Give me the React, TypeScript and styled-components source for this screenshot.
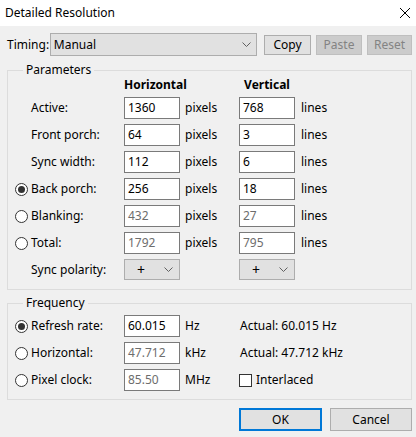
import React from 'react';
import styled, {createGlobalStyle} from 'styled-components';

const GlobalStyle = createGlobalStyle`
  html, body {
    margin: 0;
    padding: 0;
    background: #f0f0f0;
  }
  body {
    font-family: "Noto Sans", "Open Sans", sans-serif;
    font-size: 12px;
    color: #000;
  }
`

const Window = styled.div`
  width: 416px;
  height: 437px;
  background: #f0f0f0;
  overflow: hidden;
  display: flex;
  flex-direction: column;
`

const TitleBar = styled.div`
  height: 26px;
  background: #fff;
  display: flex;
  align-items: center;
  justify-content: space-between;
  padding: 0 6px 0 5px;
  flex-shrink: 0;
`

const Title = styled.span`
  font-size: 12px;
  line-height: 16px;
`

const Body = styled.div`
  padding: 7px 4px 0 7px;
  display: flex;
  flex-direction: column;
`

const TimingRow = styled.div`
  display: flex;
  align-items: center;
  height: 23px;
`

const TimingLabel = styled.span`
  width: 43px;
  line-height: 16px;
`

const Combo = styled.div`
  box-sizing: border-box;
  width: 208px;
  height: 23px;
  background: #e1e1e1;
  border: 1px solid #adadad;
  display: flex;
  align-items: center;
  justify-content: space-between;
  padding: 0 5px 0 3px;
`

const Buttons = styled.div`
  display: flex;
  gap: 5px;
  margin-left: 7px;
`

const Button = styled.button<{$disabled?: boolean; $w?: number; $h?: number; $default?: boolean}>`
  box-sizing: border-box;
  width: ${({$w}) => $w ?? 47}px;
  height: ${({$h}) => $h ?? 20}px;
  padding: 0;
  font-family: inherit;
  font-size: 12px;
  line-height: 16px;
  background: ${({$disabled}) => ($disabled ? '#cccccc' : '#e1e1e1')};
  color: ${({$disabled}) => ($disabled ? '#838383' : '#000')};
  border: ${({$default, $disabled}) =>
    $default ? '2px solid #0078d7' : `1px solid ${$disabled ? '#bfbfbf' : '#adadad'}`};
`

const Group = styled.fieldset<{$top: number}>`
  margin: ${({$top}) => $top}px 0 0 0;
  padding: 0 0 8px 7px;
  border: 1px solid #dcdcdc;
  min-width: 0;
`

const Legend = styled.legend`
  margin-left: 8px;
  padding: 0 3px;
  line-height: 16px;
  font-size: 12px;
`

const Grid = styled.div<{$pt: number; $header?: boolean}>`
  display: grid;
  grid-template-columns: 109px 56px 59px 56px 1fr;
  grid-template-rows: ${({$header}) => ($header ? '14px' : 'none')};
  grid-auto-rows: 22px;
  row-gap: 5px;
  padding-top: ${({$pt}) => $pt}px;
  align-items: center;
`

const Header = styled.div`
  font-weight: bold;
  text-align: center;
  white-space: nowrap;
  line-height: 14px;
  align-self: end;
`

const LabelCell = styled.label`
  display: flex;
  align-items: center;
  line-height: 16px;
  white-space: nowrap;
`

const RadioSlot = styled.span`
  width: 16px;
  flex-shrink: 0;
  display: flex;
  align-items: center;
`

const Radio = styled.span<{$checked?: boolean}>`
  box-sizing: border-box;
  width: 13px;
  height: 13px;
  border-radius: 50%;
  border: 1px solid #333;
  background: #fff;
  display: flex;
  align-items: center;
  justify-content: center;

  &::after {
    content: '';
    width: 7px;
    height: 7px;
    border-radius: 50%;
    background: ${({$checked}) => ($checked ? '#333' : 'transparent')};
  }
`

const Field = styled.div<{$disabled?: boolean}>`
  box-sizing: border-box;
  height: 22px;
  border: 1px solid #7a7a7a;
  background: #fff;
  color: ${({$disabled}) => ($disabled ? '#6d6d6d' : '#000')};
  padding-left: 3px;
  line-height: 20px;
`

const Unit = styled.span<{$pl: number}>`
  padding-left: ${({$pl}) => $pl}px;
  line-height: 16px;
  white-space: nowrap;
`

const Select = styled.div`
  box-sizing: border-box;
  height: 21px;
  align-self: start;
  background: #e1e1e1;
  border: 1px solid #adadad;
  display: flex;
  align-items: center;
  justify-content: space-between;
  padding: 0 6px 0 12px;
  font-size: 14px;
`

const Wide = styled.span`
  grid-column: 4 / span 2;
  line-height: 16px;
  white-space: nowrap;
  padding-left: 1px;
`

const CheckCell = styled.label`
  grid-column: 4 / span 2;
  display: flex;
  align-items: center;
  gap: 4px;
  line-height: 16px;
`

const Check = styled.span`
  box-sizing: border-box;
  width: 13px;
  height: 13px;
  border: 1px solid #333;
  background: #fff;
`

const Footer = styled.div`
  display: flex;
  justify-content: flex-end;
  gap: 8px;
  margin-top: 8px;
`

const Chevron = () => (
  <svg width="9" height="5" viewBox="0 0 9 5">
    <path d="M0.5 0.5 L4.5 4.5 L8.5 0.5" fill="none" stroke="#606060" strokeWidth="1"/>
  </svg>
)

const CloseIcon = () => (
  <svg width="10" height="10" viewBox="0 0 10 10">
    <path d="M0 0 L10 10 M10 0 L0 10" stroke="#000" strokeWidth="1"/>
  </svg>
)

type Row = {
  label: string
  radio?: 'on' | 'off'
  h: string
  v: string
  disabled?: boolean
}

const paramRows: Row[] = [
  {label: 'Active:', h: '1360', v: '768'},
  {label: 'Front porch:', h: '64', v: '3'},
  {label: 'Sync width:', h: '112', v: '6'},
  {label: 'Back porch:', radio: 'on', h: '256', v: '18'},
  {label: 'Blanking:', radio: 'off', h: '432', v: '27', disabled: true},
  {label: 'Total:', radio: 'off', h: '1792', v: '795', disabled: true},
]

const Label = ({text, radio}: {text: string; radio?: 'on' | 'off'}) => (
  <LabelCell>
    <RadioSlot>{radio && <Radio $checked={radio === 'on'}/>}</RadioSlot>
    {text}
  </LabelCell>
)

export default function App() {
  return (
    <Window>
      <GlobalStyle/>
      <TitleBar>
        <Title>Detailed Resolution</Title>
        <CloseIcon/>
      </TitleBar>
      <Body>
        <TimingRow>
          <TimingLabel>Timing:</TimingLabel>
          <Combo>
            <span>Manual</span>
            <Chevron/>
          </Combo>
          <Buttons>
            <Button>Copy</Button>
            <Button $disabled $w={46}>Paste</Button>
            <Button $disabled $w={45}>Reset</Button>
          </Buttons>
        </TimingRow>

        <Group $top={6}>
          <Legend>Parameters</Legend>
          <Grid $pt={0} $header>
            <span/>
            <Header>Horizontal</Header>
            <span/>
            <Header>Vertical</Header>
            <span/>
            {paramRows.map((r) => (
              <React.Fragment key={r.label}>
                <Label text={r.label} radio={r.radio}/>
                <Field $disabled={r.disabled}>{r.h}</Field>
                <Unit $pl={5}>pixels</Unit>
                <Field $disabled={r.disabled}>{r.v}</Field>
                <Unit $pl={6}>lines</Unit>
              </React.Fragment>
            ))}
            <Label text="Sync polarity:"/>
            <Select><span>+</span><Chevron/></Select>
            <span/>
            <Select><span>+</span><Chevron/></Select>
            <span/>
          </Grid>
        </Group>

        <Group $top={5}>
          <Legend>Frequency</Legend>
          <Grid $pt={4}>
            <Label text="Refresh rate:" radio="on"/>
            <Field>60.015</Field>
            <Unit $pl={5}>Hz</Unit>
            <Wide>Actual: 60.015 Hz</Wide>

            <Label text="Horizontal:" radio="off"/>
            <Field $disabled>47.712</Field>
            <Unit $pl={5}>kHz</Unit>
            <Wide>Actual: 47.712 kHz</Wide>

            <Label text="Pixel clock:" radio="off"/>
            <Field $disabled>85.50</Field>
            <Unit $pl={5}>MHz</Unit>
            <CheckCell><Check/>Interlaced</CheckCell>
          </Grid>
        </Group>

        <Footer>
          <Button $default $w={83} $h={23}>OK</Button>
          <Button $w={82} $h={23}>Cancel</Button>
        </Footer>
      </Body>
    </Window>
  );
}
